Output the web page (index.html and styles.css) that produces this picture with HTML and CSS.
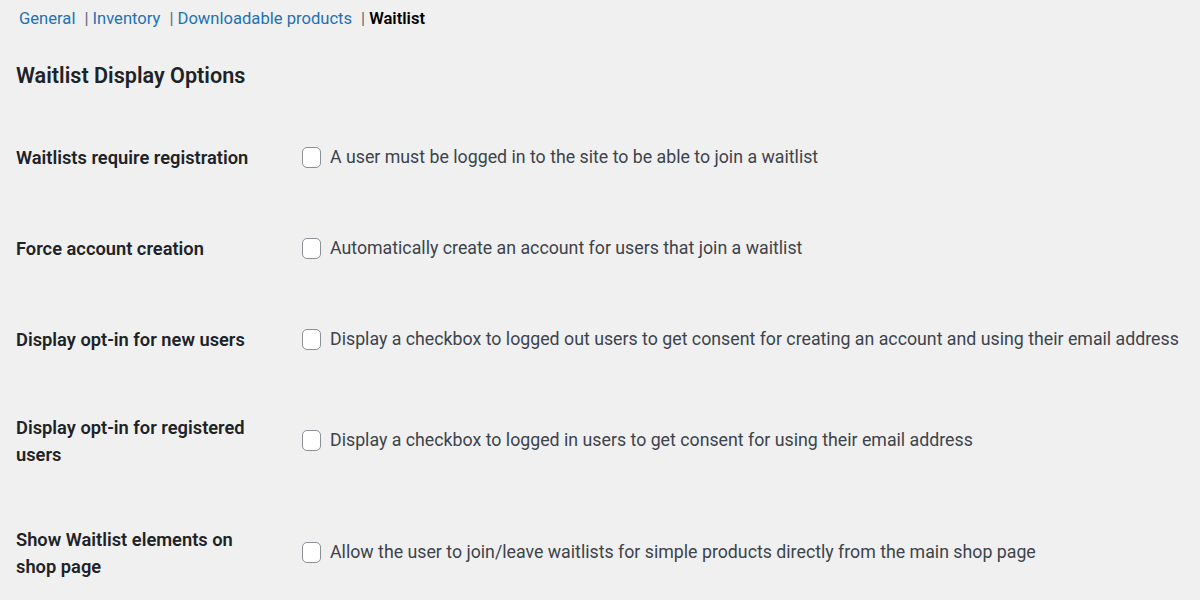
FILE: index.html
```html
<!DOCTYPE html>
<html lang="en">
<head>
  <meta charset="UTF-8" />
  <meta name="viewport" content="width=device-width, initial-scale=1.0"/>
  <title>Waitlist Settings</title>
  <link rel="stylesheet" href="styles.css">
</head>
<body>
  <ul class="subsubsub">
    <li><a href="#">General</a><span class="sep">|</span></li>
    <li><a href="#">Inventory</a><span class="sep">|</span></li>
    <li><a href="#">Downloadable products</a><span class="sep">|</span></li>
    <li><a href="#" class="current">Waitlist</a></li>
  </ul>

  <h2>Waitlist Display Options</h2>

  <div class="form-table">
    <div class="row">
      <div class="label">Waitlists require registration</div>
      <label class="field"><input type="checkbox" /> A user must be logged in to the site to be able to join a waitlist</label>
    </div>
    <div class="row">
      <div class="label">Force account creation</div>
      <label class="field"><input type="checkbox" /> Automatically create an account for users that join a waitlist</label>
    </div>
    <div class="row">
      <div class="label">Display opt-in for new users</div>
      <label class="field"><input type="checkbox" /> Display a checkbox to logged out users to get consent for creating an account and using their email address</label>
    </div>
    <div class="row">
      <div class="label">Display opt-in for registered users</div>
      <label class="field"><input type="checkbox" /> Display a checkbox to logged in users to get consent for using their email address</label>
    </div>
    <div class="row">
      <div class="label">Show Waitlist elements on shop page</div>
      <label class="field"><input type="checkbox" /> Allow the user to join/leave waitlists for simple products directly from the main shop page</label>
    </div>
  </div>
</body>
</html>
```

FILE: styles.css
```css
body {
  font-family: Roboto, 'Liberation Sans', sans-serif;
  background: #f0f0f1;
  margin: 0;
  padding: 0 16px;
  color: #3c434a;
}

.subsubsub {
  list-style: none;
  margin: 0;
  padding: 7px 0 0 3px;
  display: flex;
  gap: 4px;
  font-size: 16.6px;
  line-height: 24px;
  color: #646970;
}

.subsubsub .sep {
  margin-left: 9px;
}

.subsubsub a {
  color: #2271b1;
  text-decoration: none;
}

.subsubsub a.current {
  color: #000;
  font-weight: 600;
}

h2 {
  margin: 0;
  padding-top: 30px;
  font-size: 21.6px;
  line-height: 30px;
  font-weight: 600;
  color: #1d2327;
}

.form-table {
  margin-top: 21px;
}

.row {
  display: grid;
  grid-template-columns: 286px 1fr;
  align-items: center;
  padding: 28.5px 0 29.5px;
}

.label {
  font-size: 18.3px;
  line-height: 27px;
  font-weight: 600;
  color: #1d2327;
  padding-right: 40px;
}

.field {
  display: flex;
  align-items: center;
  min-height: 33px;
  font-size: 17.75px;
  line-height: 27px;
  white-space: nowrap;
}

.field input {
  appearance: none;
  flex: none;
  width: 19px;
  height: 21px;
  margin: 0 9px 0 0;
  border: 1.5px solid #8c8f94;
  border-radius: 5px;
  background: #fff;
}
```
